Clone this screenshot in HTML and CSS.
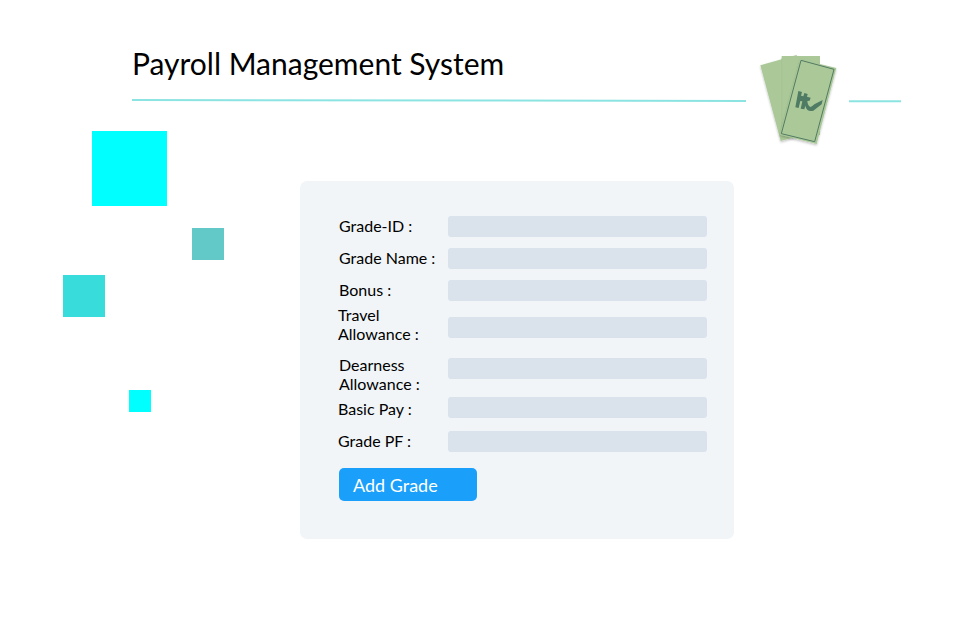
FILE: index.html
```html
<!DOCTYPE html>
<html lang="en">
<head>
<meta charset="utf-8">
<title>Payroll Management System</title>
<link rel="stylesheet" href="styles.css">
</head>
<body>
<header class="header">
  <div class="heading">
    <h1 class="title">Payroll Management System</h1>
    <svg class="rule" width="614" height="4" viewBox="0 0 614 4"><path d="M0 2L614 3" stroke="#8ce4e2" stroke-width="2"/></svg>
  </div>
  <svg class="money" width="110" height="110" viewBox="0 0 330 330">
    <defs><filter id="shade" x="-20%" y="-20%" width="140%" height="150%"><feDropShadow dx="0" dy="4" stdDeviation="3" flood-color="#000" flood-opacity=".25"/></filter></defs>
    <g fill="#abc998">
      <path filter="url(#shade)" d="M46 61L155 30L216 258L107 288Z"/>
      <path d="M110 33H225V270H110Z"/>
      <path d="M110 40V270" stroke="#a1c091" stroke-width="2"/>
      <path filter="url(#shade)" d="M166 43L274 69L215 297L105 269Z"/>
    </g>
    <path d="M168 46L267 73L209 290L109 266Z" fill="none" stroke="#527b64" stroke-width="3"/>
    <path d="M160 138L171 141L168 152L175 154L178 144L188 147L186 155L197 158L194 167L187 168Q188 183 197 186Q203 183 208 178L233 165L230 178L205 197Q185 202 181 182L178 193L167 191L172 169L166 168L161 189L151 187Z" fill="#4f7b65"/>
  </svg>
  <svg class="rule-end" width="52" height="4" viewBox="0 0 52 4"><path d="M0 2.2H52" stroke="#8ce4e2" stroke-width="2"/></svg>
</header>
<div class="square square-large"></div>
<div class="square square-muted"></div>
<div class="square square-medium"></div>
<div class="square square-small"></div>
<form class="card">
  <div class="row"><label class="label" for="grade-id">Grade-ID :</label><input class="field" id="grade-id"></div>
  <div class="row"><label class="label" for="grade-name">Grade Name :</label><input class="field" id="grade-name"></div>
  <div class="row row-bonus"><label class="label" for="bonus">Bonus :</label><input class="field" id="bonus"></div>
  <div class="row row-travel"><label class="label" for="travel">Travel Allowance :</label><input class="field" id="travel"></div>
  <div class="row row-dearness"><label class="label" for="dearness">Dearness Allowance :</label><input class="field" id="dearness"></div>
  <div class="row row-basic"><label class="label" for="basic">Basic Pay :</label><input class="field" id="basic"></div>
  <div class="row row-pf"><label class="label" for="pf">Grade PF :</label><input class="field" id="pf"></div>
  <button class="button" type="button">Add Grade</button>
</form>
</body>
</html>
```
FILE: styles.css
```css
* { box-sizing: border-box; }
body { margin: 0; background: #fff; color: #000; font-family: Lato, sans-serif; width: 980px; height: 639px; overflow: hidden; }
.header { display: flex; align-items: flex-start; height: 181px; padding: 45px 79px 0 132px; }
.heading { width: 614px; }
.title { margin: 0; font-size: 30px; font-weight: 400; line-height: 36px; height: 53px; white-space: nowrap; }
.rule, .rule-end, .money { display: block; flex: none; }
.rule-end { margin-top: 54px; }
.money { margin: 0 -6px 0 -1px; }
.square { position: absolute; background: #0ff; }
.square-large { left: 92px; top: 131px; width: 75px; height: 75px; }
.square-muted { left: 192px; top: 228px; width: 32px; height: 32px; background: #63c9c8; }
.square-medium { left: 63px; top: 275px; width: 42px; height: 42px; background: #37dcdb; }
.square-small { left: 129px; top: 390px; width: 22px; height: 22px; }
.card { width: 434px; height: 358px; margin-left: 300px; padding: 35px 27px 0 39px; border-radius: 7px; background: #f1f5f8; }
.row { display: grid; grid-template-columns: 109px 259px; align-items: start; height: 32px; }
.label { padding-top: 1px; margin-top: -1px; font-size: 16px; line-height: 19px; }
.field { width: 259px; height: 21px; padding: 0 6px; border: 0; border-radius: 3px; background: #dae2ec; font: inherit; }
.row-bonus { height: 26px; }
.row-travel { height: 50px; }
.row-travel .label { padding-top: 0; }
.row-travel .label, .row-basic .label, .row-pf .label { margin-left: -1px; }
.row-travel .label, .row-dearness .label { width: 90px; }
.row-travel .field { margin-top: 11px; }
.row-dearness { height: 41px; }
.row-dearness .label { padding-top: 0; }
.row-dearness .field { margin-top: 2px; }
.row-basic { height: 34px; }
.row-basic .label { padding-top: 3px; }
.row-pf { height: 37px; }
.button { display: block; width: 138px; height: 33px; padding: 2px 14px 0; border: 0; border-radius: 5px; background: #1a9ffb; color: #fff; font: 400 18px/31px Lato, sans-serif; text-align: left; }
```
